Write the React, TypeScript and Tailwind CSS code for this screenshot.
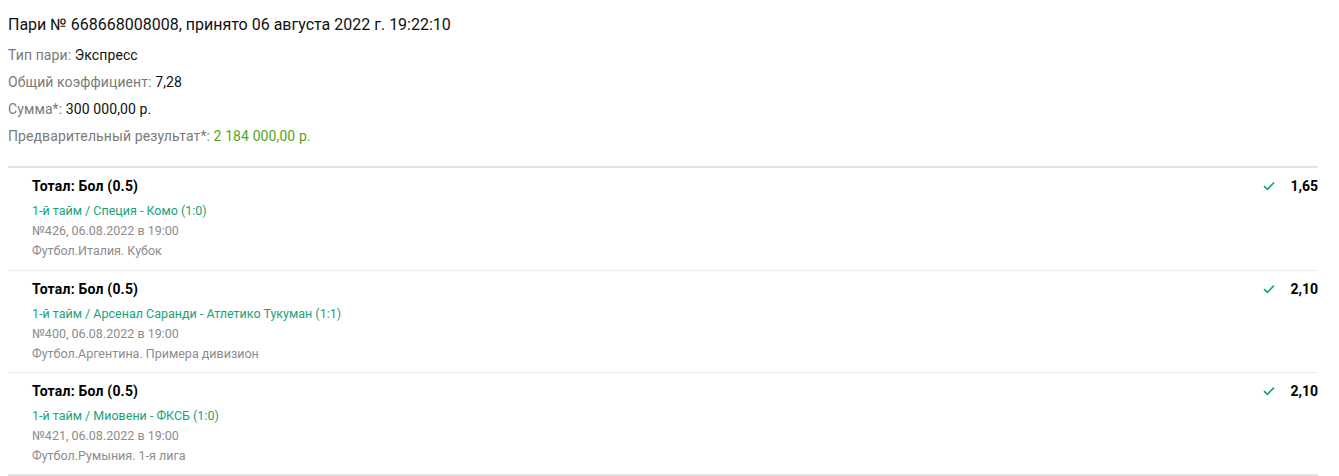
import React from 'react';

const bets = [
  {
    title: 'Тотал: Бол (0.5)',
    match: '1-й тайм / Специя - Комо (1:0)',
    info: '№426, 06.08.2022 в 19:00',
    league: 'Футбол.Италия. Кубок',
    odds: '1,65',
  },
  {
    title: 'Тотал: Бол (0.5)',
    match: '1-й тайм / Арсенал Саранди - Атлетико Тукуман (1:1)',
    info: '№400, 06.08.2022 в 19:00',
    league: 'Футбол.Аргентина. Примера дивизион',
    odds: '2,10',
  },
  {
    title: 'Тотал: Бол (0.5)',
    match: '1-й тайм / Миовени - ФКСБ (1:0)',
    info: '№421, 06.08.2022 в 19:00',
    league: 'Футбол.Румыния. 1-я лига',
    odds: '2,10',
  },
];

const Check = () => (
  <svg width="12" height="10" viewBox="0 0 12 10" fill="none">
    <path d="M1 5.2 L4.4 8.4 L11 1.6" stroke="#16a07a" strokeWidth="1.6" />
  </svg>
);

const App = () => {
  return (
    <div className="min-h-screen bg-white font-['Roboto',sans-serif] text-[#1a1a1a]">
      <div className="px-2 pt-[14px] w-[1326px]">
        <h1 className="text-[16px] leading-[22px] text-[#111]">
          Пари № 668668008008, принято 06 августа 2022 г. 19:22:10
        </h1>
        <div className="mt-[9px] text-[14px] leading-[20px] flex flex-col gap-[7px] tracking-[0.1px]">
          <p>
            <span className="text-[#7a7a7a]">Тип пари: </span>
            <span className="text-[#111]">Экспресс</span>
          </p>
          <p>
            <span className="text-[#7a7a7a]">Общий коэффициент: </span>
            <span className="text-[#111]">7,28</span>
          </p>
          <p>
            <span className="text-[#7a7a7a]">Сумма*: </span>
            <span className="text-[#111]">300 000,00 р.</span>
          </p>
          <p>
            <span className="text-[#7a7a7a]">Предварительный результат*: </span>
            <span className="text-[#54a51c]">2 184 000,00 р.</span>
          </p>
        </div>

        <div className="mt-[20px] border-t-2 border-b-2 border-[#e4e4e4]">
          {bets.map((bet, i) => (
            <div
              key={i}
              className={`flex justify-between pl-6 pt-2 pb-2 ${i > 0 ? 'border-t border-[#ececec]' : 'pb-[9px]'}`}
            >
              <div>
                <div className="text-[14px] leading-[20px] font-bold text-black tracking-[0.2px]">{bet.title}</div>
                <div className="mt-[5px] text-[12.5px] leading-[20px]">
                  <div className="text-[#17a37a]">{bet.match}</div>
                  <div className="text-[#8c8c8c]">{bet.info}</div>
                  <div className="text-[#8c8c8c]">{bet.league}</div>
                </div>
              </div>
              <div className="flex items-start gap-[15px]">
                <div className="h-5 flex items-center">
                  <Check />
                </div>
                <div className="text-[14px] leading-[20px] font-bold text-black">{bet.odds}</div>
              </div>
            </div>
          ))}
        </div>
      </div>
    </div>
  );
};

export default App;
